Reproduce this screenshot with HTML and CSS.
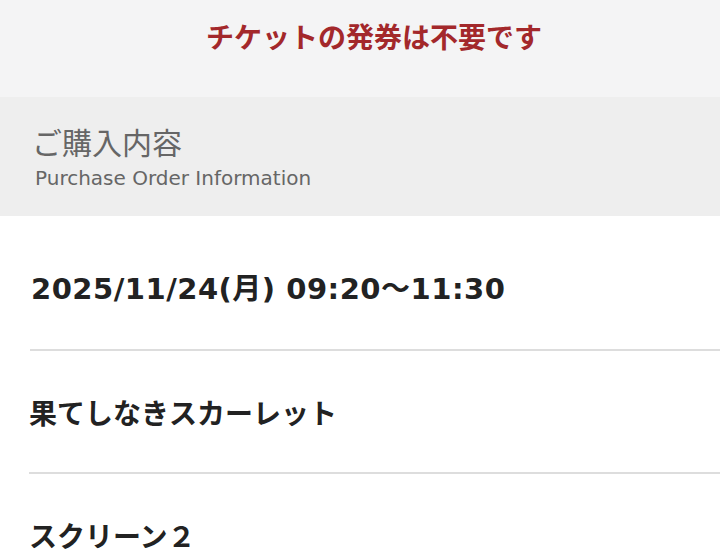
FILE: index.html
```html
<!DOCTYPE html>
<html lang="ja">
<head>
<meta charset="utf-8">
<link rel="stylesheet" href="styles.css">
</head>
<body>
<div class="notice">チケットの発券は不要です</div>
<div class="section-head">
  <div class="head-ja">ご購入内容</div>
  <div class="head-en">Purchase Order Information</div>
</div>
<ul class="items">
  <li class="item latin">2025/11/24(月) 09:20〜11:30</li>
  <li class="item">果てしなきスカーレット</li>
  <li class="item last">スクリーン２</li>
</ul>
</body>
</html>
```
FILE: styles.css
```css
html, body {
  margin: 0;
  padding: 0;
  background: #ffffff;
}
body {
  width: 720px;
  height: 556px;
  overflow: hidden;
  font-family: "Noto Sans CJK JP", sans-serif;
}
.notice {
  height: 97px;
  background: #f4f4f5;
  color: #a3282b;
  font-weight: 700;
  font-size: 28px;
  line-height: 72px;
  text-align: center;
  padding-left: 28px;
  box-sizing: border-box;
}
.section-head {
  height: 119px;
  background: #eeeeee;
  box-sizing: border-box;
  padding: 25px 0 0 32px;
}
.head-ja {
  color: #666666;
  font-size: 30px;
  line-height: 38px;
}
.head-en {
  color: #666666;
  font-family: "DejaVu Sans", "Noto Sans CJK JP", sans-serif;
  font-size: 20px;
  line-height: 30px;
  padding: 3px 0 0 3px;
}
.items {
  list-style: none;
  margin: 0 0 0 30px;
  padding: 12px 0 0 0;
}
.item {
  height: 121px;
  border-bottom: 2px solid #dddddd;
  color: #222222;
  font-weight: 700;
  font-size: 28px;
  line-height: 122px;
  margin-left: -1px;
  padding-left: 0;
}
.item.latin {
  font-family: "DejaVu Sans", "Noto Sans CJK JP", sans-serif;
  font-size: 29px;
  letter-spacing: 0.5px;
  margin-left: 0;
  padding-left: 1px;
}
.item.last {
  height: 80px;
  border-bottom: none;
}
```
